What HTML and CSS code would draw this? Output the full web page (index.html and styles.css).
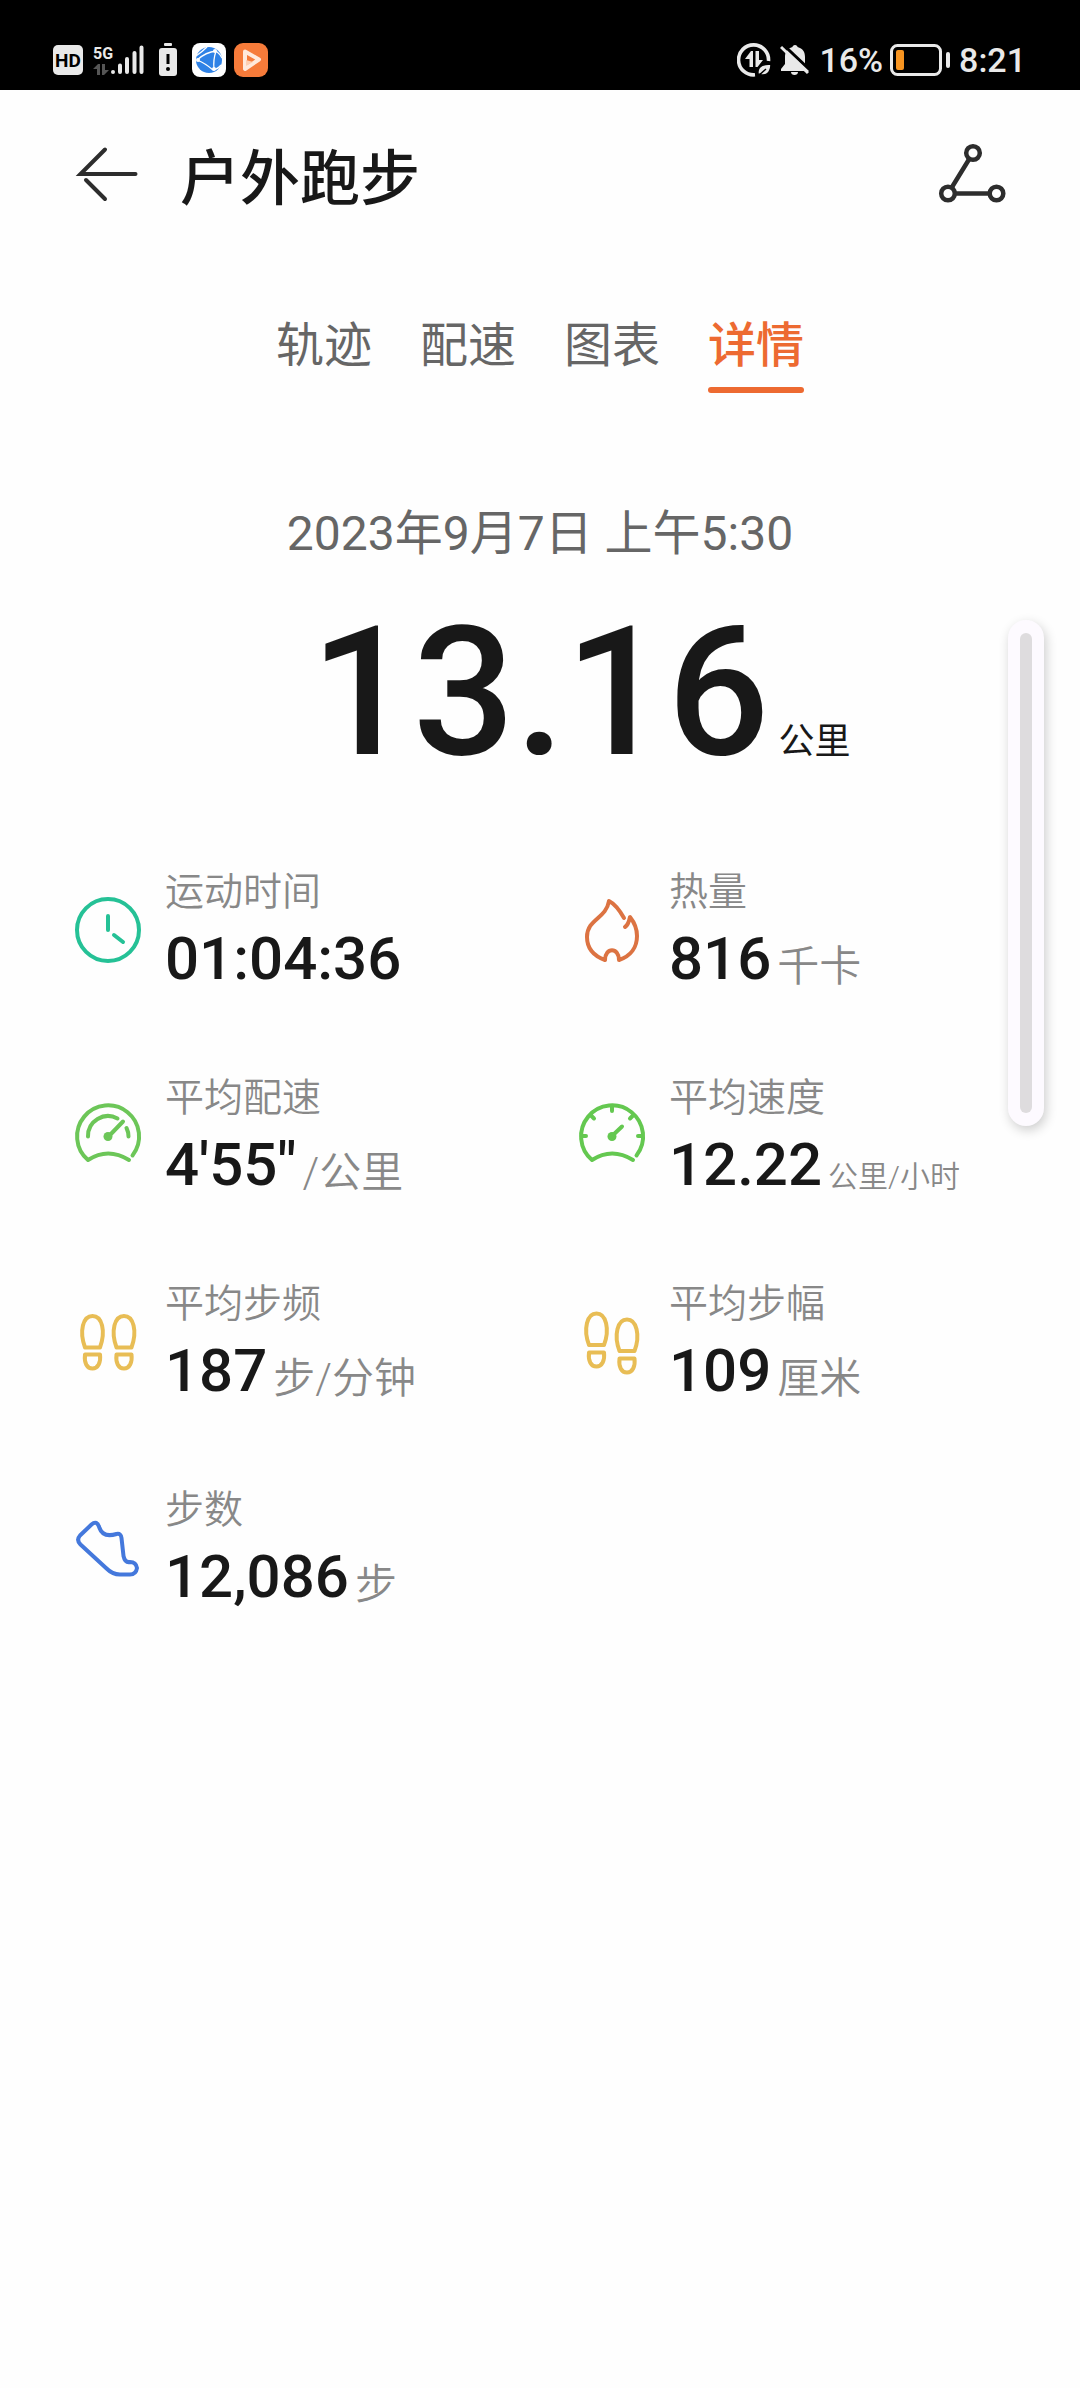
FILE: index.html
```
<!DOCTYPE html>
<html lang="zh-CN">
<head>
    <meta charset="UTF-8">
    <meta name="viewport" content="width=device-width, initial-scale=1.0">
    <title>户外跑步</title>
    <link rel="stylesheet" href="styles.css">
</head>
<body>
    <div class="status-bar">
        <div class="status-group status-left">
            <span class="hd-badge">HD</span>
            <div class="signal">
                <div class="network">
                    <span class="network-type">5G</span>
                    <svg width="16" height="12" viewBox="0 0 16 12" fill="#555"><path d="M0 5 5 0h2v11H4V5zM9 0h3v6h4l-5 5H9z"/></svg>
                </div>
                <svg width="34" height="32" viewBox="0 0 34 32" stroke="#e9e9e9" stroke-width="4" stroke-linecap="round">
                    <path d="M3 28v0M10 21.500v6.500M17 15v13M24.500 9v19M31.500 3.500v24.500"/>
                </svg>
            </div>
            <svg class="battery-alert" width="20" height="34" viewBox="0 0 20 34">
                <rect x="6" y="0" width="8" height="3" rx="1" fill="#e9e9e9"/>
                <rect x="1" y="5" width="18" height="28" rx="3" fill="#e9e9e9"/>
                <path d="M10 11v10" stroke="#000" stroke-width="3"/>
                <circle cx="10" cy="26" r="2" fill="#000"/>
            </svg>
            <svg class="browser-app" width="34" height="34" viewBox="0 0 34 34">
                <rect width="34" height="34" rx="8" fill="#fff"/>
                <circle cx="17" cy="17" r="13" fill="#2f82e6"/>
                <g fill="none" stroke="#fff" stroke-width="1.300">
                    <path d="M5 17Q14 9 24 8M5 17Q13 20 21 27M24 8Q21 17 22 26M4 13Q11 8 15 4M24 8Q28 11 30 15M21 27Q26 26 29 22"/>
                </g>
                <g fill="#fff"><circle cx="6" cy="17" r="2"/><circle cx="23" cy="8" r="2"/><circle cx="22" cy="26" r="2"/></g>
            </svg>
            <svg class="video-app" width="34" height="34" viewBox="0 0 34 34">
                <rect width="34" height="34" rx="9" fill="#f67b3a"/>
                <path d="M11 8.500 25 16.500 11 26z" fill="none" stroke="#ffe9dc" stroke-width="4" stroke-linejoin="round"/>
                <path d="M12 17v6l7-4z" fill="#ffcfb1"/>
            </svg>
        </div>
        <div class="status-group">
            <svg class="data-saver" width="34" height="34" viewBox="0 0 34 34">
                <path d="M31.500 18A15 15 0 1 0 18 31.800" fill="none" stroke="#e9e9e9" stroke-width="3.600"/>
                <path d="M8 16 14 8h2v16h-3.500v-8zM18.500 8H22v9h4l-5.500 7h-2z" fill="#e9e9e9"/>
                <path d="M34 21c-8 0-14 2-13 10 8 3 13-1 13-10zM20 34l9-8" fill="#e9e9e9" stroke="#000" stroke-width="1.500"/>
            </svg>
            <svg class="muted" width="30" height="32" viewBox="0 0 30 32">
                <path d="M15 1c-1.500 0-2.500 1-2.500 2C7 4.500 5 8 5 13v7l-4 5v2h28v-2l-4-5v-7c0-5-2-8.500-7.500-10 0-1-1-2-2.500-2zM11 28h7c0 2-1.500 3-3.500 3S11 30 11 28z" fill="#e9e9e9"/>
                <path d="M3 .500 31 27" stroke="#000" stroke-width="3"/>
                <path d="M1 3 28 29" stroke="#e9e9e9" stroke-width="3"/>
            </svg>
            <span>16%</span>
            <svg class="battery" width="60" height="32" viewBox="0 0 60 32">
                <rect x="1.500" y="1.500" width="49" height="29" rx="6" fill="none" stroke="#e9e9e9" stroke-width="3"/>
                <rect x="6" y="6" width="8" height="20" rx="2" fill="#f79420"/>
                <path d="M58 10v12" stroke="#e9e9e9" stroke-width="4" stroke-linecap="round"/>
            </svg>
            <time>8:21</time>
        </div>
    </div>

    <header class="app-bar">
        <button class="icon-button" type="button" aria-label="返回">
            <svg width="72" height="72" viewBox="0 0 72 72" fill="none" stroke="#2d2d2d" stroke-width="4" stroke-linecap="round">
                <path d="M63.500 36H8.500L33 11.500M14 42l19 19"/>
            </svg>
        </button>
        <h1>户外跑步</h1>
        <button class="icon-button" type="button" aria-label="分享">
            <svg width="72" height="72" viewBox="0 0 72 72" fill="none" stroke="#2d2d2d" stroke-width="4.500">
                <circle cx="37" cy="15" r="6.800"/>
                <circle cx="12" cy="55.500" r="6.800"/>
                <circle cx="60.500" cy="55.500" r="6.800"/>
                <path d="M33.400 20.800 15.600 49.700M19 55.500h34.500"/>
            </svg>
        </button>
    </header>

    <nav class="tabs">
        <a class="tab" href="#track">轨迹</a>
        <a class="tab" href="#pace">配速</a>
        <a class="tab" href="#chart">图表</a>
        <a class="tab active" href="#detail">详情</a>
    </nav>

    <main id="detail">
        <section class="summary">
            <p class="date">2023年9月7日 上午5:30</p>
            <p class="distance">
                <span class="distance-value">13.16</span>
                <span class="distance-unit">公里</span>
            </p>
        </section>

        <section class="stats">
            <div class="stat">
                <svg class="stat-icon" viewBox="0 0 72 72" stroke="#25c196">
                    <circle cx="36" cy="36" r="31"/>
                    <path d="M36 22v14M42 41l9 7"/>
                </svg>
                <div>
                    <p class="label">运动时间</p>
                    <p class="value">01:04:36</p>
                </div>
            </div>
            <div class="stat">
                <svg class="stat-icon" viewBox="0 0 72 72" stroke="#dc7342">
                    <path d="M48 24C44 17 39 10 33 7C30 25 11 25 11 43C11 55 18 62 29 66C29 53 43 53 43 66C55 62 61 53 61 42C61 34 58 28 54 23C53 28 52 31 49 33"/>
                </svg>
                <div>
                    <p class="label">热量</p>
                    <p class="value">816<span class="unit">千卡</span></p>
                </div>
            </div>
            <div class="stat">
                <svg class="stat-icon" viewBox="0 0 72 72" stroke="#6cc658">
                    <path d="M60.500 55.500A31 31 0 1 0 16 60Q36 47 57 60M16 36.500A20 20 0 0 1 45.500 18.500M54.500 28Q56.500 32 56.500 36.500M37 36 51 21.500"/>
                    <circle cx="36" cy="36.500" r="4.500" fill="#6cc658" stroke="none"/>
                </svg>
                <div>
                    <p class="label">平均配速</p>
                    <p class="value">4'55"<span class="unit">/公里</span></p>
                </div>
            </div>
            <div class="stat">
                <svg class="stat-icon" viewBox="0 0 72 72" stroke="#64c850">
                    <path d="M60.500 55.500A31 31 0 1 0 16 60Q36 47 57 60M36 7v4M5 36h5M62 36h5M15.500 16 18 18.500M56.500 16 54 18.500M36 36 46 26.500"/>
                    <circle cx="36" cy="36.500" r="4.500" fill="#64c850" stroke="none"/>
                </svg>
                <div>
                    <p class="label">平均速度</p>
                    <p class="value">12.22<span class="unit unit-small">公里/小时</span></p>
                </div>
            </div>
            <div class="stat">
                <svg class="stat-icon" viewBox="0 0 72 72" stroke="#e8bd55">
                    <path d="M13 41.500C7 25 11 10 20.500 10S34 25 28 41.500zM13 48.500h15c1 8-2 14-7.500 14S12 57 13 48.500z"/>
                    <path d="M44.500 41.500C38.500 25 42.500 10 52 10S65.500 25 59.500 41.500zM44.500 48.500h15c1 8-2 14-7.500 14S43.500 57 44.500 48.500z"/>
                </svg>
                <div>
                    <p class="label">平均步频</p>
                    <p class="value">187<span class="unit">步/分钟</span></p>
                </div>
            </div>
            <div class="stat">
                <svg class="stat-icon" viewBox="0 0 72 72" stroke="#e8bd55">
                    <path d="M13 39C7 23 11 7.500 20.500 7.500S34 23 28 39zM13 46.500h15c1 8-2 14-7.500 14S12 55 13 46.500z"/>
                    <path d="M43.500 45C37.500 29 41.500 13.500 51 13.500S64.500 29 58.500 45zM43.500 52.500h15c1 8-2 14-7.500 14S42.500 61 43.500 52.500z"/>
                </svg>
                <div>
                    <p class="label">平均步幅</p>
                    <p class="value">109<span class="unit">厘米</span></p>
                </div>
            </div>
            <div class="stat">
                <svg class="stat-icon" viewBox="0 0 72 72" stroke="#4478dc">
                    <path d="M19.500 12.500 8 23.500Q4 28 8.500 32.500L34 56Q41 63 49 62.500H58Q64 62.500 65 56Q64 50 58 50Q53 51 51.500 44L49.500 26Q49 21 44.500 22Q31 26 27.500 16Q25 7.500 19.500 12.500z"/>
                </svg>
                <div>
                    <p class="label">步数</p>
                    <p class="value">12,086<span class="unit">步</span></p>
                </div>
            </div>
        </section>
    </main>

    <!-- edge handle floating over the page -->
    <div class="edge-handle"><div class="edge-handle-bar"></div></div>
</body>
</html>
```
FILE: styles.css
```
* {
    box-sizing: border-box;
}

body {
    margin: 0;
    min-height: 100vh;
    background: #fefefe;
    color: #181818;
    font-family: Roboto, "Noto Sans CJK SC", sans-serif;
}

h1,
p {
    margin: 0;
}

svg {
    display: block;
    flex-shrink: 0;
}

.status-bar {
    display: flex;
    justify-content: space-between;
    height: 90px;
    padding: 30px 54px 0 53px;
    background: #000;
    color: #e9e9e9;
    font-size: 34px;
    font-weight: 500;
    line-height: 60px;
}

.status-group {
    display: flex;
    align-items: center;
    gap: 9px;
}

.status-left {
    gap: 8px;
}

.hd-badge {
    width: 30px;
    height: 30px;
    border-radius: 5px;
    background: #e9e9e9;
    color: #000;
    font-size: 19px;
    font-weight: 700;
    line-height: 31px;
    text-align: center;
}

.signal {
    display: flex;
    align-items: flex-end;
    margin-left: 2px;
}

.network {
    display: flex;
    flex-direction: column;
    align-items: flex-start;
}

.network-type {
    width: 17px;
    font-size: 16px;
    font-weight: 700;
    line-height: 20px;
}

.battery-alert {
    margin-left: 6px;
}

.browser-app {
    margin-left: 6px;
}

.battery {
    margin-left: -2px;
}

.app-bar {
    display: flex;
    align-items: center;
    height: 168px;
    padding: 0 72px;
}

.icon-button {
    padding: 0;
    border: none;
    background: none;
    cursor: pointer;
}

.app-bar h1 {
    flex: 1;
    margin-left: 36px;
    padding-top: 12px;
    font-size: 60px;
    font-weight: 500;
    line-height: 88px;
}

.tabs {
    display: flex;
    justify-content: center;
    gap: 48px;
    padding-top: 52px;
}

.tab {
    position: relative;
    padding-bottom: 11px;
    color: #666;
    font-size: 48px;
    line-height: 72px;
    text-decoration: none;
}

.tab.active {
    color: #ed6a31;
    font-weight: 500;
}

.tab.active::after {
    content: '';
    position: absolute;
    left: 0;
    right: 0;
    bottom: 0;
    height: 6px;
    border-radius: 3px;
    background: #ed6a31;
}

.summary {
    padding-top: 105px;
}

.date {
    color: #666;
    font-size: 48px;
    line-height: 72px;
    text-align: center;
}

.distance {
    display: grid;
    grid-template-columns: 1fr auto 1fr;
    align-items: baseline;
    column-gap: 9px;
    margin-top: 18px;
}

.distance-value {
    grid-column: 2;
    font-size: 180px;
    font-weight: 500;
    line-height: 210px;
}

.distance-unit {
    padding-top: 2px;
    font-size: 36px;
    line-height: 40px;
}

.stats {
    display: grid;
    grid-template-columns: 1fr 1fr;
    column-gap: 72px;
    row-gap: 72px;
    padding: 65px 72px;
}

.stat {
    display: flex;
    align-items: center;
    gap: 21px;
    height: 134px;
}

.stat-icon {
    width: 72px;
    height: 72px;
    fill: none;
    stroke-width: 4;
    stroke-linecap: round;
    stroke-linejoin: round;
}

.label {
    color: #888;
    font-size: 39px;
    font-weight: 350;
    line-height: 58px;
}

.value {
    font-size: 60px;
    font-weight: 500;
    line-height: 76px;
    white-space: nowrap;
}

.unit {
    margin-left: 6px;
    color: #888;
    font-size: 42px;
    font-weight: 350;
    line-height: 1;
    vertical-align: -2px;
}

.unit-small {
    font-size: 30px;
}

.edge-handle {
    position: fixed;
    top: 620px;
    right: 36px;
    width: 36px;
    height: 506px;
    padding: 13px 12px;
    border-radius: 18px;
    background: #fdfaff;
    box-shadow: 2px 4px 12px rgba(0, 0, 0, 0.2);
}

.edge-handle-bar {
    height: 100%;
    border-radius: 6px;
    background: #dedcde;
}
```
